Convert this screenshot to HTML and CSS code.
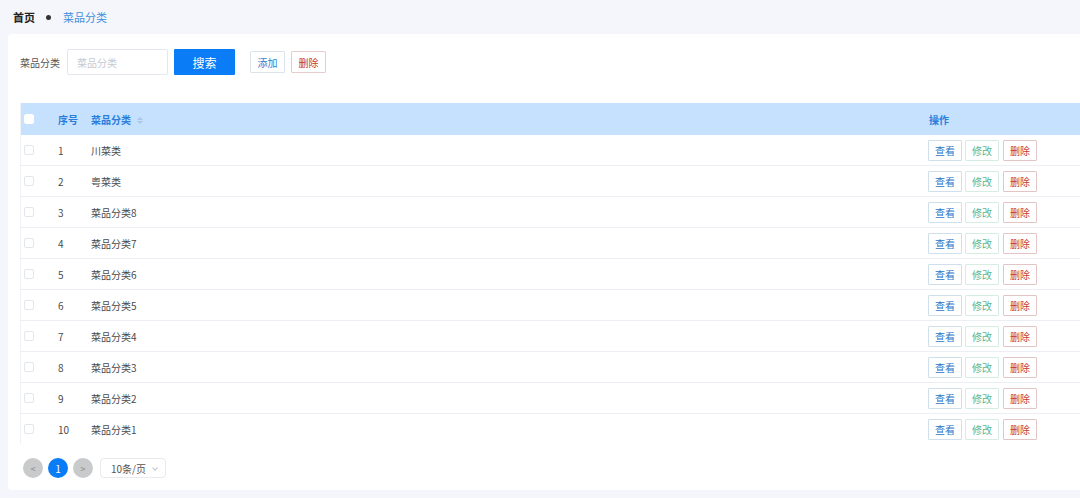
FILE: index.html
```html
<!DOCTYPE html>
<html lang="zh">
<head>
    <meta charset="UTF-8">
    <meta name="viewport" content="width=device-width, initial-scale=1.0">
    <title>菜品分类</title>
    <link rel="stylesheet" href="styles.css">
</head>
<body>
    <div class="crumb">
        <span class="crumb-home">首页</span>
        <span class="crumb-dot"></span>
        <span class="crumb-cur">菜品分类</span>
    </div>

    <div class="card">
        <div class="search">
            <label class="search-label">菜品分类</label>
            <input class="search-input" type="text" placeholder="菜品分类">
            <button class="btn-search">搜索</button>
            <button class="btn-add">添加</button>
            <button class="btn-del">删除</button>
        </div>

        <table class="list">
            <thead>
                <tr>
                    <th class="col-ck"><span class="ck ck-head"></span></th>
                    <th class="col-no">序号</th>
                    <th class="col-name">菜品分类 <span class="sort"><i class="up"></i><i class="down"></i></span></th>
                    <th class="col-op">操作</th>
                </tr>
            </thead>
            <tbody id="rows"></tbody>
        </table>

        <div class="pager">
            <span class="pg pg-arrow">&lt;</span>
            <span class="pg pg-cur">1</span>
            <span class="pg pg-arrow">&gt;</span>
            <span class="pg-size">10条/页 <i class="pg-caret"></i></span>
        </div>
    </div>

    <script>
        let names = ["川菜类", "粤菜类", "菜品分类8", "菜品分类7", "菜品分类6", "菜品分类5", "菜品分类4", "菜品分类3", "菜品分类2", "菜品分类1"];
        let html = "";
        for (let i = 0; i < names.length; i++) {
            html += '<tr>'
                + '<td class="col-ck"><span class="ck"></span></td>'
                + '<td class="col-no">' + (i + 1) + '</td>'
                + '<td class="col-name">' + names[i] + '</td>'
                + '<td class="col-op"><button class="op op-view">查看</button><button class="op op-edit">修改</button><button class="op op-del">删除</button></td>'
                + '</tr>';
        }
        document.getElementById("rows").innerHTML = html;
    </script>
</body>
</html>
```

FILE: styles.css
```css
body {
    margin: 0;
    background: #f4f6fb;
    font-family: "Noto Sans CJK SC", "Noto Sans", sans-serif;
    color: #333;
    overflow: hidden;
}

.crumb {
    height: 34px;
    display: flex;
    align-items: center;
    padding-left: 13px;
    font-size: 11px;
}

.crumb-home {
    font-weight: bold;
    color: #222;
}

.crumb-dot {
    width: 5px;
    height: 5px;
    border-radius: 50%;
    background: #333;
    margin: 0 12px 0 11px;
}

.crumb-cur {
    color: #3d8fdc;
}

.card {
    margin-left: 8px;
    width: 1100px;
    background: #fff;
    padding: 15px 0 12px 12px;
    border-radius: 4px 0 0 4px;
}

.search {
    display: flex;
    align-items: center;
    height: 26px;
}

.search-label {
    font-size: 10px;
    color: #555;
    margin-right: 7px;
}

.search-input {
    box-sizing: border-box;
    width: 101px;
    height: 26px;
    border: 1px solid #e4e7ed;
    border-radius: 2px;
    padding: 0 9px;
    font-size: 10px;
    font-family: inherit;
    outline: none;
}

.search-input::placeholder {
    color: #c6c9cf;
}

button {
    font-family: inherit;
    cursor: pointer;
}

.btn-search {
    width: 61px;
    height: 26px;
    margin-left: 6px;
    border: none;
    border-radius: 1px;
    background: #0a7cf6;
    color: #fff;
    font-size: 12px;
}

.btn-add, .btn-del {
    height: 22px;
    width: 35px;
    padding: 0;
    background: #fff;
    font-size: 10px;
    border-radius: 1px;
}

.btn-add {
    margin-left: 15px;
    border: 1px solid #dde3ea;
    color: #2f7cd0;
}

.btn-del {
    margin-left: 6px;
    border: 1px solid #e6cccc;
    color: #c43a32;
}

.list {
    margin-top: 28px;
    width: 1080px;
    border-collapse: collapse;
    font-size: 10px;
    border-left: 1px solid #f0f2f5;
}

.list th {
    height: 32px;
    background: #c5e1fd;
    color: #2a7ddd;
    font-weight: bold;
    text-align: left;
    padding: 0 0 0 4px;
}

.list td {
    height: 30px;
    padding: 0 0 0 4px;
    border-bottom: 1px solid #ebeef3;
    color: #4a4a4a;
}

.list tbody tr:last-child td {
    border-bottom: none;
}

.list .col-ck {
    width: 30px;
    padding-left: 3px;
}

.col-no {
    width: 29px;
}

.col-op {
    width: 147px;
}

.list th.col-op {
    width: 171px;
    padding-left: 4px;
}

.list td.col-op {
    padding-left: 3px;
}

.ck {
    display: block;
    width: 8px;
    height: 8px;
    border: 1px solid #e3e6ea;
    border-radius: 2px;
    background: #fff;
}

.ck-head {
    border-color: #fff;
}

.sort {
    display: inline-flex;
    flex-direction: column;
    vertical-align: middle;
    margin-left: 4px;
    gap: 1px;
}

.sort i {
    width: 0;
    height: 0;
    border-left: 3px solid transparent;
    border-right: 3px solid transparent;
}

.sort .up {
    border-bottom: 3px solid #aac6e6;
}

.sort .down {
    border-top: 3px solid #aac6e6;
}

.op {
    height: 21px;
    width: 34px;
    padding: 0;
    margin-right: 3px;
    background: #fff;
    font-size: 10px;
    border-radius: 1px;
    vertical-align: middle;
}

.op-view {
    border: 1px solid #cfe0ea;
    color: #2c74c9;
}

.op-edit {
    border: 1px solid #d6ede4;
    color: #5cb58c;
}

.op-del {
    border: 1px solid #e2c6c6;
    color: #c43a32;
    margin-left: 1px;
}

.pager {
    margin-top: 14px;
    display: flex;
    align-items: center;
    padding-left: 3px;
    height: 20px;
}

.pg {
    width: 20px;
    height: 20px;
    border-radius: 50%;
    display: flex;
    align-items: center;
    justify-content: center;
    font-size: 10px;
    margin-right: 5px;
}

.pg-arrow {
    background: #c9cacc;
    color: #888;
    font-size: 9px;
}

.pg-cur {
    background: #0a7cf6;
    color: #fff;
}

.pg-size {
    box-sizing: border-box;
    margin-left: 2px;
    width: 66px;
    height: 20px;
    border: 1px solid #e8eaee;
    border-radius: 4px;
    font-size: 10px;
    color: #555;
    display: flex;
    align-items: center;
    padding-left: 10px;
    position: relative;
}

.pg-caret {
    position: absolute;
    right: 8px;
    top: 7px;
    width: 3px;
    height: 3px;
    border-right: 1px solid #c0c4cc;
    border-bottom: 1px solid #c0c4cc;
    transform: rotate(45deg);
}
```
